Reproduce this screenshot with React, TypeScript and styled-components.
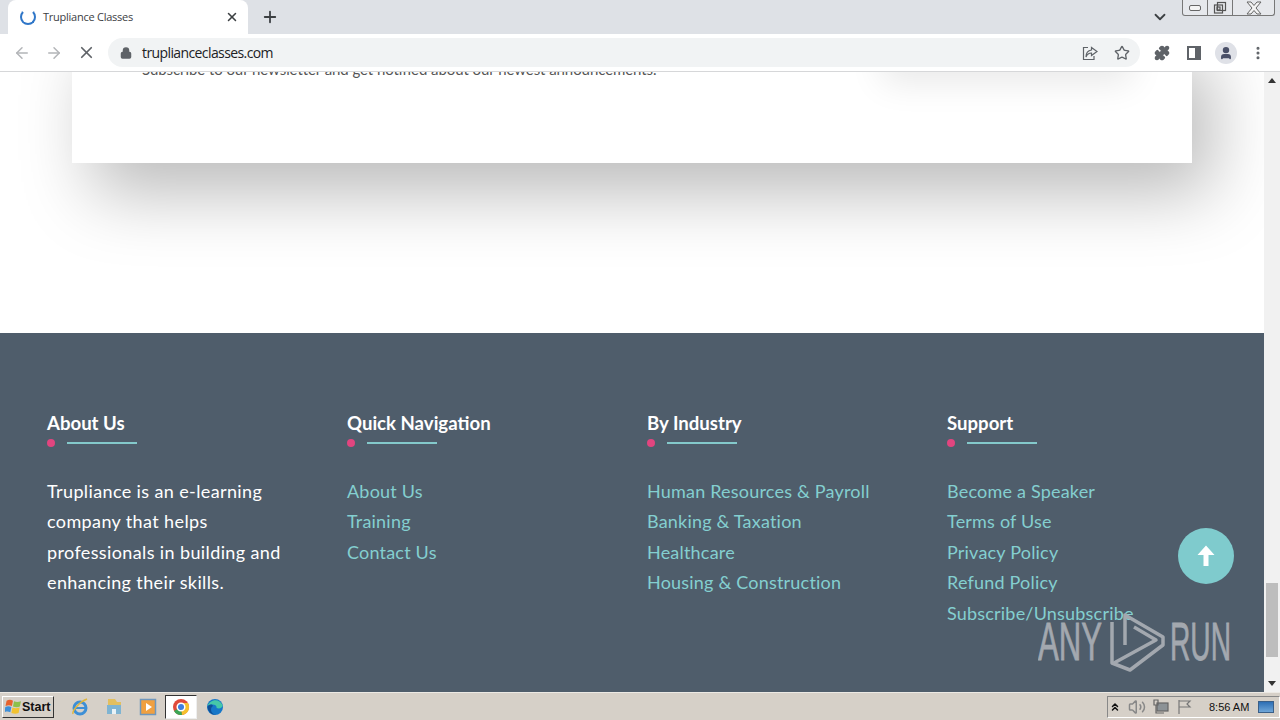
import React from "react";
import styled, { createGlobalStyle } from "styled-components";
import {
  ArrowLeft,
  ArrowRight,
  ChevronDown,
  ChevronsUp,
  EllipsisVertical,
  Lock,
  Plus,
  Puzzle,
  Star,
  User,
  Volume2,
  X,
} from "lucide-react";

const Global = createGlobalStyle`
  html, body { margin: 0; padding: 0; background: #fff; overflow: hidden; }
  * { box-sizing: border-box; }
`;

const columns = [
  { title: "Quick Navigation", links: ["About Us", "Training", "Contact Us"] },
  {
    title: "By Industry",
    links: ["Human Resources & Payroll", "Banking & Taxation", "Healthcare", "Housing & Construction"],
  },
  {
    title: "Support",
    links: ["Become a Speaker", "Terms of Use", "Privacy Policy", "Refund Policy", "Subscribe/Unsubscribe"],
  },
];

const App = () => {
  return (
    <S.Window>
      <Global />
      <S.TabStrip>
        <S.Tab>
          <S.Spinner />
          <S.TabTitle>Trupliance Classes</S.TabTitle>
          <X size={14} strokeWidth={2.6} color="#3c4043" />
        </S.Tab>
        <S.NewTab>
          <Plus size={18} strokeWidth={2.4} color="#3c4043" />
        </S.NewTab>
        <S.StripRight>
          <ChevronDown size={18} strokeWidth={2.4} color="#3c4043" />
          <S.WinControls>
            <S.WinButton $w={25}>
              <S.MinGlyph />
            </S.WinButton>
            <S.WinButton $w={25}>
              <svg width="14" height="14" viewBox="0 0 14 14" fill="none" stroke="#555" strokeWidth="1.2">
                <rect x="1.5" y="4" width="8" height="8" />
                <rect x="4.5" y="1.5" width="8" height="8" />
                <rect x="4" y="6" width="3" height="3" />
              </svg>
            </S.WinButton>
            <S.WinButton $w={41}>
              <svg width="16" height="14" viewBox="0 0 16 14" fill="#f4f4f4" stroke="#666" strokeWidth="1">
                <path d="M1 1h4l3 3.500L11 1h4l-5 6 5 6h-4L8 9.500 5 13H1l5-6z" />
              </svg>
            </S.WinButton>
          </S.WinControls>
        </S.StripRight>
      </S.TabStrip>

      <S.Toolbar>
        <S.NavIcon>
          <ArrowLeft size={18} strokeWidth={2} color="#b3b5b8" />
        </S.NavIcon>
        <S.NavIcon>
          <ArrowRight size={18} strokeWidth={2} color="#b3b5b8" />
        </S.NavIcon>
        <S.NavIcon>
          <X size={19} strokeWidth={2.2} color="#5f6368" />
        </S.NavIcon>
        <S.Omnibox>
          <Lock size={12} strokeWidth={3} color="#5f6368" fill="#5f6368" />
          <S.Url>truplianceclasses.com</S.Url>
          <S.OmniIcons>
            <svg width="16" height="16" viewBox="0 0 16 16" fill="none" stroke="#5f6368" strokeWidth="1.2">
              <path d="M6 2.500H1.500v12H12V11" />
              <path d="M9.500 2.500 15 6.500l-5.500 4V8C7 8 5 9.500 4 12c0-4 2-6.500 5.500-7z" />
            </svg>
            <Star size={16} strokeWidth={2} color="#5f6368" />
          </S.OmniIcons>
        </S.Omnibox>
        <S.ToolIcons>
          <S.ToolCell>
            <Puzzle size={16} color="#5f6368" fill="#5f6368" />
          </S.ToolCell>
          <S.ToolCell>
            <S.SidePanel />
          </S.ToolCell>
          <S.ToolCell>
            <S.Avatar>
              <User size={14} strokeWidth={3} color="#4a5068" fill="#4a5068" />
            </S.Avatar>
          </S.ToolCell>
          <S.ToolCell>
            <EllipsisVertical size={16} strokeWidth={2.6} color="#5f6368" />
          </S.ToolCell>
        </S.ToolIcons>
      </S.Toolbar>

      <S.Viewport>
        <S.Page>
          <S.Card>
            <S.FormShadow />
            <S.CardText>Subscribe to our newsletter and get notified about our newest announcements.</S.CardText>
          </S.Card>
          <S.Footer>
            <S.Column>
              <S.Heading>About Us</S.Heading>
              <S.Rule>
                <S.Dot />
                <S.Line />
              </S.Rule>
              <S.About>
                Trupliance is an e-learning
                <br />
                company that helps
                <br />
                professionals in building and
                <br />
                enhancing their skills.
              </S.About>
            </S.Column>
            {columns.map((col) => (
              <S.Column key={col.title}>
                <S.Heading>{col.title}</S.Heading>
                <S.Rule>
                  <S.Dot />
                  <S.Line />
                </S.Rule>
                {col.links.map((link) => (
                  <S.FooterLink key={link}>{link}</S.FooterLink>
                ))}
              </S.Column>
            ))}
            <S.TopButton>
              <svg width="24" height="24" viewBox="0 0 24 24" fill="#fff">
                <path d="M12 1.500 20.500 11H14.500v11h-5V11H3.500z" />
              </svg>
            </S.TopButton>
            <S.Watermark>
              <svg width="196" height="70" viewBox="0 0 196 70">
                <text
                  x="0"
                  y="53"
                  fontFamily="Liberation Sans"
                  fontSize="53"
                  fill="#a3a8af"
                  stroke="#a3a8af"
                  strokeWidth="0.8"
                  textLength="64"
                  lengthAdjust="spacingAndGlyphs"
                >
                  ANY
                </text>
                <g fill="none" stroke="#a3a8af" strokeWidth="3.5" strokeLinejoin="round">
                  <path d="M74 15V56L92 63 125 38V30L87 8V38" />
                  <path d="M76 56 118 33 96 20" />
                </g>
                <text
                  x="132"
                  y="53"
                  fontFamily="Liberation Sans"
                  fontSize="53"
                  fill="#a3a8af"
                  stroke="#a3a8af"
                  strokeWidth="0.8"
                  textLength="61"
                  lengthAdjust="spacingAndGlyphs"
                >
                  RUN
                </text>
              </svg>
            </S.Watermark>
          </S.Footer>
        </S.Page>
        <S.Scrollbar>
          <S.ArrowBox>
            <S.TriUp />
          </S.ArrowBox>
          <S.Thumb />
          <S.ArrowBox>
            <S.TriDown />
          </S.ArrowBox>
        </S.Scrollbar>
      </S.Viewport>

      <S.Taskbar>
        <S.StartButton>
          <svg width="17" height="17" viewBox="0 0 16 16">
            <path d="M1.500 2.500c2-1 4-1 6 0L6.500 7.500c-2-1-3.500-1-6 0z" fill="#e8622c" />
            <path d="M8.500 3c2 1 4 1 6.500 0L14 8c-2 1-4 1-6.500 0z" fill="#8cc04a" />
            <path d="M.3 8.500c2-1 3.700-1 5.700 0L5 13.500c-2-1-3.500-1-5.700 0z" fill="#3f8fd8" />
            <path d="M7 9c2 1 4 1 6.800 0l-1 5c-2 1-4 1-6.800 0z" fill="#f2c230" />
          </svg>
          Start
        </S.StartButton>
        <S.TaskIcons>
          <S.TaskIcon>
            <svg width="18" height="18" viewBox="0 0 18 18" fill="none">
              <circle cx="9" cy="10" r="6" stroke="#3d8fd6" strokeWidth="3" />
              <path d="M4 10h10" stroke="#3d8fd6" strokeWidth="2" />
              <path d="M2 16C1 13 8 4 16 1" stroke="#e0b63c" strokeWidth="1.500" />
            </svg>
          </S.TaskIcon>
          <S.TaskIcon>
            <svg width="18" height="18" viewBox="0 0 18 18">
              <path d="M3 1h7l2 3h4v6H3z" fill="#e3bf5e" />
              <path d="M2 7h14v9H2z" fill="#7fb4d2" />
              <path d="M7 11h4v5H7z" fill="#e9f2f6" />
            </svg>
          </S.TaskIcon>
          <S.TaskIcon>
            <svg width="18" height="18" viewBox="0 0 18 18">
              <rect x="1.500" y="1.500" width="15" height="15" fill="#f0a040" stroke="#6f97bd" strokeWidth="1.500" />
              <path d="M7 5l6 4-6 4z" fill="#fff" />
            </svg>
          </S.TaskIcon>
          <S.ActiveTask>
            <svg width="18" height="18" viewBox="0 0 18 18">
              <circle cx="9" cy="9" r="8" fill="#e04a3a" />
              <path d="M9 9 2 13a8 8 0 0 0 8 4z" fill="#3aa655" />
              <path d="M9 5h7a8 8 0 0 1-6 12z" fill="#f6c02c" />
              <circle cx="9" cy="9" r="3.800" fill="#3f7fe0" stroke="#fff" strokeWidth="1.500" />
            </svg>
          </S.ActiveTask>
          <S.TaskIcon>
            <svg width="18" height="18" viewBox="0 0 18 18">
              <circle cx="9" cy="9" r="8" fill="#1777c8" />
              <path d="M1.500 8C3 2 13-1 16.500 7c.5 3-3 4-6 3 1-3-4-5-9-2z" fill="#46c8a8" />
              <path d="M7 8c-3 1-3 8 3 9-4 0-8-3-8.500-8C3 6 6 6 7 8z" fill="#0f4f96" />
            </svg>
          </S.TaskIcon>
        </S.TaskIcons>
        <S.Tray>
          <ChevronsUp size={12} strokeWidth={3} color="#111" />
          <Volume2 size={18} color="#888" />
          <svg width="16" height="16" viewBox="0 0 16 16" fill="none" stroke="#666" strokeWidth="1.200">
            <rect x="4" y="4" width="11" height="8" fill="#8c9296" />
            <path d="M1 1h4v5H1zM3 6v8h8" />
          </svg>
          <svg width="16" height="16" viewBox="0 0 16 16" fill="none" stroke="#777" strokeWidth="1.200">
            <path d="M3 1v14M3 2h11l-3 3 3 3H3" />
          </svg>
          <S.Clock>8:56 AM</S.Clock>
          <S.ShowDesktop />
        </S.Tray>
      </S.Taskbar>
    </S.Window>
  );
};

export default App;

const nunito = `"Lato", "Noto Sans", sans-serif`;

const S = {
  Window: styled.div`
    width: 1280px;
    height: 720px;
    display: flex;
    flex-direction: column;
    overflow: hidden;
    font-family: "Open Sans", sans-serif;
  `,
  TabStrip: styled.div`
    height: 34px;
    flex: none;
    background: #dee1e6;
    display: flex;
    padding-left: 8px;
  `,
  Tab: styled.div`
    width: 240px;
    height: 34px;
    padding: 0 9px 1px 12px;
    background: #fff;
    border-radius: 8px 8px 0 0;
    display: flex;
    align-items: center;
    gap: 7px;
  `,
  Spinner: styled.div`
    width: 16px;
    height: 16px;
    flex: none;
    border-radius: 50%;
    border: 2px solid #2f76c8;
    border-top-color: transparent;
  `,
  TabTitle: styled.span`
    flex: 1;
    font-size: 11px;
    letter-spacing: -0.25px;
    color: #3c4043;
  `,
  NewTab: styled.div`
    width: 28px;
    height: 34px;
    margin-left: 8px;
    display: flex;
    align-items: center;
    justify-content: center;
  `,
  StripRight: styled.div`
    margin-left: auto;
    height: 34px;
    display: flex;
    align-items: flex-start;
    padding-top: 8px;
  `,
  WinControls: styled.div`
    display: flex;
    height: 16px;
    margin: -8px 5px 0 13px;
    border: 1px solid #777;
    border-top: none;
    border-radius: 0 0 3px 3px;
    background: #e6e8ec;
  `,
  WinButton: styled.div<{ $w: number }>`
    width: ${(p) => p.$w}px;
    display: flex;
    align-items: center;
    justify-content: center;
    border-right: 1px solid #777;
    &:last-child {
      border-right: none;
    }
  `,
  MinGlyph: styled.div`
    width: 12px;
    height: 6px;
    border: 1px solid #666;
    border-radius: 2px;
    background: #f4f4f4;
  `,
  Toolbar: styled.div`
    height: 38px;
    flex: none;
    background: #fff;
    border-bottom: 1px solid #d6d7d9;
    display: flex;
    align-items: center;
    padding-left: 6px;
  `,
  NavIcon: styled.div`
    width: 32px;
    display: flex;
    justify-content: center;
  `,
  Omnibox: styled.div`
    margin-left: 6px;
    width: 1032px;
    height: 29px;
    border-radius: 15px;
    background: #f1f3f4;
    display: flex;
    align-items: center;
    padding-left: 12px;
  `,
  Url: styled.span`
    margin-left: 10px;
    font-size: 14px;
    letter-spacing: -0.6px;
    color: #202124;
  `,
  OmniIcons: styled.div`
    margin-left: auto;
    display: flex;
    align-items: center;
    gap: 16px;
    padding-right: 10px;
  `,
  ToolIcons: styled.div`
    display: flex;
    align-items: center;
    margin-left: 6px;
  `,
  ToolCell: styled.div`
    width: 32px;
    display: flex;
    align-items: center;
    justify-content: center;
  `,
  SidePanel: styled.div`
    width: 14px;
    height: 14px;
    border: 2px solid #5f6368;
    border-right-width: 6px;
  `,
  Avatar: styled.div`
    width: 22px;
    height: 22px;
    border-radius: 50%;
    background: #dfe1e7;
    display: flex;
    align-items: center;
    justify-content: center;
  `,
  Viewport: styled.div`
    height: 620px;
    flex: none;
    display: flex;
  `,
  Page: styled.div`
    flex: 1;
    min-width: 0;
    overflow: hidden;
    background: #fff;
    display: flex;
    flex-direction: column;
    position: relative;
  `,
  Card: styled.div`
    flex: none;
    width: 1120px;
    height: 131px;
    margin: -40px 0 170px 72px;
    padding: 25px 70px 0;
    background: #fff;
    box-shadow: 20px 30px 70px rgba(0, 0, 0, 0.27);
    position: relative;
  `,
  FormShadow: styled.div`
    position: absolute;
    right: 60px;
    top: -40px;
    width: 250px;
    height: 76px;
    box-shadow: 0 15px 35px rgba(0, 0, 0, 0.09);
  `,
  CardText: styled.div`
    font-family: ${nunito};
    font-size: 15px;
    line-height: 24px;
    letter-spacing: -0.07px;
    color: #555;
  `,
  Footer: styled.div`
    flex: 1;
    background: #4f5d6b;
    padding: 77px 0 0 47px;
    display: flex;
    position: relative;
  `,
  Column: styled.div`
    width: 300px;
    flex: none;
    display: flex;
    flex-direction: column;
    align-items: flex-start;
    font-family: ${nunito};
  `,
  Heading: styled.div`
    font-size: 18.6px;
    line-height: 26px;
    font-weight: 700;
    color: #fff;
  `,
  Rule: styled.div`
    display: flex;
    align-items: center;
    gap: 12px;
    height: 8px;
    margin: 3px 0 29px;
  `,
  Dot: styled.span`
    width: 8px;
    height: 8px;
    border-radius: 50%;
    background: #e2457f;
  `,
  Line: styled.span`
    width: 70px;
    height: 2px;
    background: #84c9cb;
  `,
  About: styled.div`
    font-size: 18px;
    line-height: 30.4px;
    letter-spacing: 0.38px;
    color: #fff;
  `,
  FooterLink: styled.a`
    font-size: 18px;
    line-height: 30.4px;
    letter-spacing: 0.2px;
    color: #84cfd0;
    white-space: nowrap;
  `,
  TopButton: styled.div`
    position: absolute;
    left: 1178px;
    top: 195px;
    width: 56px;
    height: 56px;
    border-radius: 50%;
    background: #7fcbcd;
    display: flex;
    align-items: center;
    justify-content: center;
  `,
  Watermark: styled.div`
    position: absolute;
    left: 1038px;
    top: 274px;
    line-height: 0;
  `,
  Scrollbar: styled.div`
    width: 16px;
    flex: none;
    background: #f1f1f1;
    display: flex;
    flex-direction: column;
    align-items: center;
    justify-content: space-between;
  `,
  ArrowBox: styled.div`
    width: 16px;
    height: 17px;
    display: flex;
    align-items: center;
    justify-content: center;
  `,
  TriUp: styled.span`
    border: 4px solid transparent;
    border-top: none;
    border-bottom: 5px solid #333;
  `,
  TriDown: styled.span`
    border: 4px solid transparent;
    border-bottom: none;
    border-top: 5px solid #333;
  `,
  Thumb: styled.div`
    width: 12px;
    height: 74px;
    margin-top: auto;
    margin-bottom: 18px;
    background: #bdbdbd;
  `,
  Taskbar: styled.div`
    height: 28px;
    flex: none;
    background: #d6d0c8;
    border-top: 1px solid #ece9e4;
    display: flex;
    align-items: center;
    padding-left: 2px;
  `,
  StartButton: styled.div`
    width: 52px;
    height: 22px;
    display: flex;
    align-items: center;
    padding-left: 2px;
    background: #d6d0c8;
    border: 1px solid;
    border-color: #fff #333 #333 #fff;
    font-family: "Liberation Sans", sans-serif;
    font-size: 12.5px;
    font-weight: 700;
    color: #111;
  `,
  TaskIcons: styled.div`
    display: flex;
    align-items: center;
    margin-left: 9px;
    gap: 1px;
  `,
  TaskIcon: styled.div`
    width: 33px;
    height: 24px;
    display: flex;
    align-items: center;
    justify-content: center;
  `,
  ActiveTask: styled.div`
    width: 32px;
    height: 24px;
    display: flex;
    align-items: center;
    justify-content: center;
    background: #fff;
    border: 1px solid;
    border-color: #333 #eee #eee #333;
  `,
  Tray: styled.div`
    margin-left: auto;
    height: 22px;
    width: 173px;
    border: 1px solid;
    border-color: #888 #fff #fff #888;
    display: flex;
    align-items: center;
    gap: 7px;
    padding-left: 1px;
  `,
  Clock: styled.span`
    margin-left: 10px;
    font-family: "Liberation Sans", sans-serif;
    font-size: 11px;
    color: #111;
    white-space: nowrap;
  `,
  ShowDesktop: styled.div`
    width: 16px;
    height: 12px;
    margin-left: 2px;
    background: linear-gradient(#2d6fb5, #6fa6d8);
    border: 1px solid #3a5f88;
  `,
};
